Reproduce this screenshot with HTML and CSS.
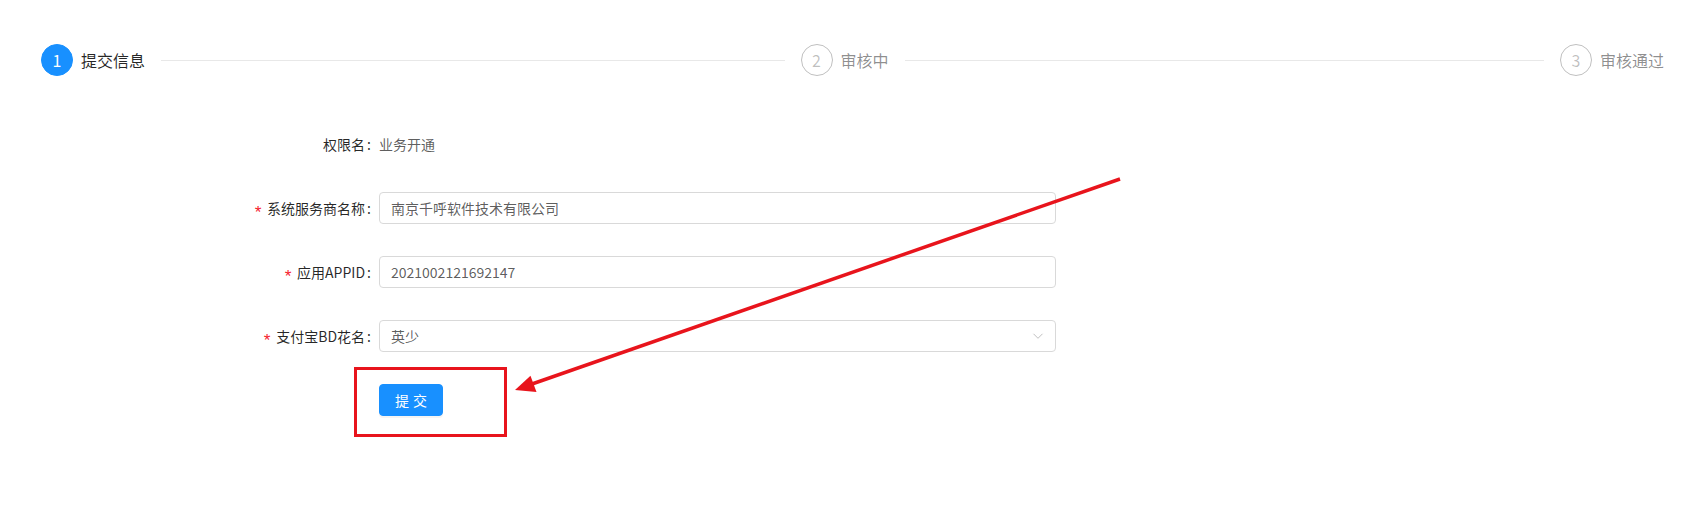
FILE: index.html
```html
<!DOCTYPE html>
<html>
<head>
  <meta charset="utf-8">
  <title>权限申请</title>
  <link rel="stylesheet" href="styles.css">
</head>
<body>
  <div class="page">
    <div class="steps">
      <div class="step step-active">
        <span class="step-icon">1</span>
        <span class="step-title">提交信息</span>
        <span class="step-line"></span>
      </div>
      <div class="step">
        <span class="step-icon">2</span>
        <span class="step-title">审核中</span>
        <span class="step-line"></span>
      </div>
      <div class="step step-last">
        <span class="step-icon">3</span>
        <span class="step-title">审核通过</span>
      </div>
    </div>

    <form class="form">
      <div class="form-item">
        <label class="form-label">权限名</label>
        <span class="form-text">业务开通</span>
      </div>
      <div class="form-item">
        <label class="form-label required" for="provider">系统服务商名称</label>
        <input class="form-input" type="text" id="provider" value="南京千呼软件技术有限公司">
      </div>
      <div class="form-item">
        <label class="form-label required" for="appid">应用APPID</label>
        <input class="form-input" type="text" id="appid" value="2021002121692147">
      </div>
      <div class="form-item">
        <label class="form-label required">支付宝BD花名</label>
        <div class="form-input form-select">
          <span>英少</span>
          <svg class="select-arrow" viewBox="0 0 12 12" width="12" height="12">
            <path d="M1.5 3.8 L6 8.3 L10.5 3.8" fill="none" stroke="currentColor" stroke-width="1"/>
          </svg>
        </div>
      </div>
      <div class="form-actions">
        <button type="button" class="btn-primary">提交</button>
      </div>
    </form>
  </div>

  <!-- annotation drawn over the screenshot -->
  <svg class="annotation" width="1708" height="523" viewBox="0 0 1708 523">
    <rect x="355.5" y="368.5" width="150" height="67" fill="none" stroke="#e8141c" stroke-width="3"/>
    <line x1="1120" y1="179" x2="532" y2="384" stroke="#e8141c" stroke-width="3.5"/>
    <polygon points="515,390 530.5,375.8 536.5,392" fill="#e8141c"/>
  </svg>
</body>
</html>
```

FILE: styles.css
```css
html {
  font-family: "Noto Sans CJK SC", "Noto Sans", sans-serif;
}

body {
  margin: 0;
  font-size: 14px;
  color: rgba(0, 0, 0, 0.65);
  background: #fff;
}

.page {
  padding: 44px 28px 0 41px;
}

/* steps */
.steps {
  display: flex;
}

.step {
  flex: 1 1 0;
  display: flex;
  align-items: center;
  height: 32px;
  white-space: nowrap;
}

.step-last {
  flex: none;
  padding-right: 16px;
}

.step-icon {
  width: 32px;
  height: 32px;
  box-sizing: border-box;
  border: 1px solid rgba(0, 0, 0, 0.25);
  border-radius: 50%;
  display: flex;
  align-items: center;
  justify-content: center;
  margin-right: 8px;
  font-size: 16px;
  line-height: 1;
  color: rgba(0, 0, 0, 0.25);
}

.step-active .step-icon {
  background: #1890ff;
  border-color: #1890ff;
  color: #fff;
}

.step-title {
  font-size: 16px;
  line-height: 32px;
  color: rgba(0, 0, 0, 0.45);
}

.step-active .step-title {
  color: rgba(0, 0, 0, 0.85);
}

.step-line {
  flex: 1;
  height: 1px;
  margin: 0 16px;
  background: #e8e8e8;
}

/* form */
.form {
  margin-top: 48px;
}

.form-item {
  display: flex;
  align-items: center;
  height: 40px;
  margin-bottom: 24px;
}

.form-label {
  flex: none;
  width: 338px;
  text-align: right;
  white-space: nowrap;
  color: rgba(0, 0, 0, 0.85);
  line-height: 40px;
}

.form-label::after {
  content: ':';
  margin: 0 8px 0 2px;
}

.required::before {
  content: '*';
  display: inline-block;
  margin-right: 4px;
  color: #f5222d;
  font-family: "Liberation Mono", monospace;
  font-size: 17px;
  vertical-align: -4px;
  line-height: 1;
}

.form-text {
  line-height: 40px;
}

.form-input {
  width: 677px;
  height: 32px;
  box-sizing: border-box;
  padding: 4px 11px;
  border: 1px solid #d9d9d9;
  border-radius: 4px;
  font-family: inherit;
  font-size: 14px;
  color: rgba(0, 0, 0, 0.65);
  background: #fff;
  outline: none;
}

.form-select {
  display: flex;
  align-items: center;
  justify-content: space-between;
}

.select-arrow {
  color: rgba(0, 0, 0, 0.25);
}

.form-actions {
  display: flex;
  align-items: center;
  height: 40px;
  padding-left: 338px;
}

.btn-primary {
  width: 64px;
  height: 32px;
  box-sizing: border-box;
  padding: 0 0 0 4px;
  border: 1px solid #1890ff;
  border-radius: 4px;
  background: #1890ff;
  color: #fff;
  font-family: inherit;
  font-size: 14px;
  letter-spacing: 4px;
  text-align: center;
  box-shadow: 0 2px 0 rgba(0, 0, 0, 0.045);
}

.annotation {
  position: absolute;
  top: 0;
  left: 0;
  pointer-events: none;
}
```
